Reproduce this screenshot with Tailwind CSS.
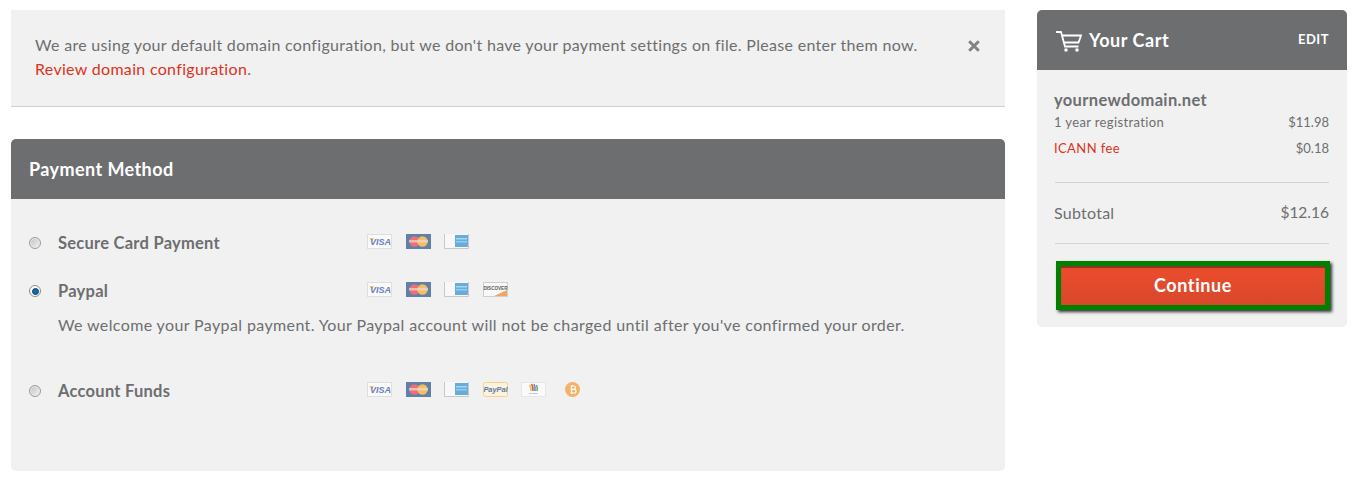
<!DOCTYPE html>
<html lang="en">
<head>
    <meta charset="UTF-8">
    <title>Payment Method</title>
    <script src="https://cdn.jsdelivr.net/npm/@tailwindcss/browser@4"></script>
</head>
<body class="bg-white font-['Lato',sans-serif] text-[#6d6e70] overflow-hidden">
    <div class="flex items-start pt-[10px] pl-[11px] gap-[32px]">
        <!-- left column -->
        <div class="w-[994px]">
            <div class="h-[97px] bg-[#f1f1f1] border-b border-[#cfcfcf] pl-[24px] pr-[25px] pt-[23px] flex justify-between items-start">
                <p class="text-[16px] tracking-[0.31px] leading-[24px]">We are using your default domain configuration, but we don't have your payment settings on file. Please enter them now.<br><a href="#" class="text-[#dc3322]">Review domain configuration</a>.</p>
                <svg class="w-[12px] h-[12px] mt-[7px] shrink-0" viewBox="0 0 12 12"><path d="M1.2 1.2 10.8 10.8M10.8 1.2 1.2 10.8" stroke="#808285" stroke-width="3"/></svg>
            </div>

            <div class="mt-[32px] h-[332px] bg-[#f1f1f1] rounded-[5px] overflow-hidden">
                <div class="h-[60px] bg-[#6d6e70] flex items-center px-[18px]">
                    <h2 class="text-white text-[18px] tracking-[0.42px] font-bold">Payment Method</h2>
                </div>

                <div class="px-[18px] pt-[32px]">
                    <!-- secure card -->
                    <div class="flex items-center h-[24px]">
                        <span class="w-[12px] h-[12px] rounded-full border border-[#9a9a9a] bg-gradient-to-br from-[#c0c0c0] to-[#f4f4f4] shadow-[inset_0_0_0_1px_#ececec]"></span>
                        <span class="ml-[17px] w-[309px] text-[16.5px] tracking-[0.25px] font-bold">Secure Card Payment</span>
                        <div class="flex gap-[13.5px] -mt-[4px]">
                            <svg class="w-[25px] h-[15px]" viewBox="0 0 25 15"><rect x=".5" y=".5" width="24" height="14" fill="#fafafa" stroke="#dedede"/><path d="M2 4 7 4 5.5 7Z" fill="#f3c26b"/><text x="13.5" y="11" text-anchor="middle" font-size="9" font-weight="700" font-style="italic" fill="#6a7fbe" font-family="Liberation Sans">VISA</text></svg>
                            <svg class="w-[25px] h-[15px]" viewBox="0 0 25 15"><rect width="25" height="15" fill="#5f80a8"/><circle cx="8.5" cy="7.5" r="5.2" fill="#ee6f78"/><circle cx="16.5" cy="7.5" r="5.2" fill="#f6bd63"/><rect x="3" y="6" width="19" height="2.5" fill="#e9dcd0" opacity=".7"/></svg>
                            <svg class="w-[25px] h-[15px]" viewBox="0 0 25 15"><path d="M.5 0V14.5H24.5V0" fill="#f8f8f8" stroke="#c8c8c8"/><rect x="11" y="1" width="13" height="12" fill="#63aedb"/><rect x="12" y="4" width="11" height="1.5" fill="#a8d5ef"/><rect x="12" y="7" width="11" height="1.5" fill="#98cbea"/></svg>
                        </div>
                    </div>

                    <!-- paypal -->
                    <div class="flex items-center h-[24px] mt-[24px]">
                        <span class="w-[12px] h-[12px] rounded-full border border-[#8a8a8a] bg-white flex items-center justify-center"><span class="w-[7px] h-[7px] rounded-full bg-[#0f6da8] border border-[#0a3f66]"></span></span>
                        <span class="ml-[17px] w-[309px] text-[16.5px] tracking-[0.25px] font-bold">Paypal</span>
                        <div class="flex gap-[13.5px] -mt-[4px]">
                            <svg class="w-[25px] h-[15px]" viewBox="0 0 25 15"><rect x=".5" y=".5" width="24" height="14" fill="#fafafa" stroke="#dedede"/><path d="M2 4 7 4 5.5 7Z" fill="#f3c26b"/><text x="13.5" y="11" text-anchor="middle" font-size="9" font-weight="700" font-style="italic" fill="#6a7fbe" font-family="Liberation Sans">VISA</text></svg>
                            <svg class="w-[25px] h-[15px]" viewBox="0 0 25 15"><rect width="25" height="15" fill="#5f80a8"/><circle cx="8.5" cy="7.5" r="5.2" fill="#ee6f78"/><circle cx="16.5" cy="7.5" r="5.2" fill="#f6bd63"/><rect x="3" y="6" width="19" height="2.5" fill="#e9dcd0" opacity=".7"/></svg>
                            <svg class="w-[25px] h-[15px]" viewBox="0 0 25 15"><path d="M.5 0V14.5H24.5V0" fill="#f8f8f8" stroke="#c8c8c8"/><rect x="11" y="1" width="13" height="12" fill="#63aedb"/><rect x="12" y="4" width="11" height="1.5" fill="#a8d5ef"/><rect x="12" y="7" width="11" height="1.5" fill="#98cbea"/></svg>
                            <svg class="w-[25px] h-[15px]" viewBox="0 0 25 15"><rect x=".5" y=".5" width="24" height="14" fill="#fafafa" stroke="#cfcfcf"/><path d="M11 14 24 14 24 8Z" fill="#f0a65e"/><text x="12.5" y="7.5" text-anchor="middle" font-size="4.6" font-weight="700" fill="#5a5a5a" font-family="Liberation Sans">DISCOVER</text></svg>
                        </div>
                    </div>
                    <p class="ml-[29px] mt-[10px] text-[16px] tracking-[0.38px] leading-[24px]">We welcome your Paypal payment. Your Paypal account will not be charged until after you've confirmed your order.</p>

                    <!-- account funds -->
                    <div class="flex items-center h-[24px] mt-[42px]">
                        <span class="w-[12px] h-[12px] rounded-full border border-[#9a9a9a] bg-gradient-to-br from-[#c0c0c0] to-[#f4f4f4] shadow-[inset_0_0_0_1px_#ececec]"></span>
                        <span class="ml-[17px] w-[309px] text-[16.5px] tracking-[0.25px] font-bold">Account Funds</span>
                        <div class="flex gap-[13.5px] -mt-[4px]">
                            <svg class="w-[25px] h-[15px]" viewBox="0 0 25 15"><rect x=".5" y=".5" width="24" height="14" fill="#fafafa" stroke="#dedede"/><path d="M2 4 7 4 5.5 7Z" fill="#f3c26b"/><text x="13.5" y="11" text-anchor="middle" font-size="9" font-weight="700" font-style="italic" fill="#6a7fbe" font-family="Liberation Sans">VISA</text></svg>
                            <svg class="w-[25px] h-[15px]" viewBox="0 0 25 15"><rect width="25" height="15" fill="#5f80a8"/><circle cx="8.5" cy="7.5" r="5.2" fill="#ee6f78"/><circle cx="16.5" cy="7.5" r="5.2" fill="#f6bd63"/><rect x="3" y="6" width="19" height="2.5" fill="#e9dcd0" opacity=".7"/></svg>
                            <svg class="w-[25px] h-[15px]" viewBox="0 0 25 15"><path d="M.5 0V14.5H24.5V0" fill="#f8f8f8" stroke="#c8c8c8"/><rect x="11" y="1" width="13" height="12" fill="#63aedb"/><rect x="12" y="4" width="11" height="1.5" fill="#a8d5ef"/><rect x="12" y="7" width="11" height="1.5" fill="#98cbea"/></svg>
                            <svg class="w-[25px] h-[15px]" viewBox="0 0 25 15"><rect x=".5" y=".5" width="24" height="14" rx="2" fill="#fdf3dc" stroke="#f5d38f"/><text x="12.5" y="10" text-anchor="middle" font-size="7.4" font-weight="700" font-style="italic" fill="#5d7ba6" font-family="Liberation Sans">PayPal</text></svg>
                            <svg class="w-[25px] h-[15px]" viewBox="0 0 25 15"><rect x=".5" y=".5" width="24" height="14" fill="#fafafa" stroke="#e6e6e6"/><path d="M8.5 3Q10.5 6 10 9" fill="none" stroke="#e8c14a" stroke-width="1.6"/><path d="M10.5 2Q12.5 5 12 9" fill="none" stroke="#df5b55" stroke-width="1.6"/><path d="M13 2Q14.5 5 14 9" fill="none" stroke="#5b8fd8" stroke-width="1.6"/><path d="M15.5 3Q16.8 6 16 9" fill="none" stroke="#69b25c" stroke-width="1.6"/><rect x="8" y="11" width="9" height="1" fill="#b9cbe6"/></svg>
                            <svg class="w-[25px] h-[15px]" viewBox="0 0 25 15"><circle cx="12.5" cy="7.5" r="7.5" fill="#f5b266"/><path d="M10.5 4H14Q15.5 4 15.5 5.6 15.5 7.3 14 7.3H10.5M14 7.3Q16 7.3 16 9.2 16 11 14 11H10.5M11.5 4V11M12 3V4M12 11V12" fill="none" stroke="#fff" stroke-width="1.2"/></svg>
                        </div>
                    </div>
                </div>
            </div>
        </div>

        <!-- cart -->
        <aside class="w-[310px] h-[317px] bg-[#f1f1f1] rounded-[5px] overflow-hidden">
            <div class="h-[60px] bg-[#6d6e70] flex items-center justify-between pl-[19px] pr-[18px] text-white">
                <div class="flex items-center">
                    <svg class="w-[26px] h-[21px] mt-[2px]" viewBox="0 0 26 21" fill="none" stroke="#fff" stroke-width="1.8"><path d="M0 1H5L9 15.5H22.5M6 4.5H25L22.5 11.5H8"/><circle cx="10" cy="19" r="1.8" fill="#fff" stroke="none"/><circle cx="21" cy="19" r="1.8" fill="#fff" stroke="none"/></svg>
                    <span class="ml-[7px] text-[18px] tracking-[0.55px] font-bold">Your Cart</span>
                </div>
                <a href="#" class="text-[13px] tracking-[0.5px] font-bold">EDIT</a>
            </div>
            <div class="px-[18px]">
                <div class="pt-[20px] pb-[22px] border-b border-[#d4d4d4]">
                    <div class="-ml-[1px] text-[16.5px] tracking-[0.35px] leading-[20px] font-bold">yournewdomain.net</div>
                    <div class="flex justify-between text-[13px] leading-[24px]"><span class="-ml-[1px] tracking-[0.37px]">1 year registration</span><span>$11.98</span></div>
                    <div class="flex justify-between text-[13px] leading-[24px] mt-[2px]"><span class="-ml-[1px] tracking-[0.4px] text-[#dc3322]">ICANN fee</span><span>$0.18</span></div>
                </div>
                <div class="flex justify-between h-[61px] items-center border-b border-[#d4d4d4] text-[15.5px]"><span class="-ml-[1px] text-[16px] tracking-[0.25px]">Subtotal</span><span>$12.16</span></div>
                <button class="mt-[17px] ml-[1px] w-[274px] h-[49px] bg-gradient-to-b from-[#ec4d2e] to-[#d9472a] border-[5px] border-[#008000] text-white text-[18px] tracking-[0.6px] font-bold shadow-[2px_2px_3px_#333,inset_0_2px_1px_#8a3422]">Continue</button>
            </div>
        </aside>
    </div>
</body>
</html>
